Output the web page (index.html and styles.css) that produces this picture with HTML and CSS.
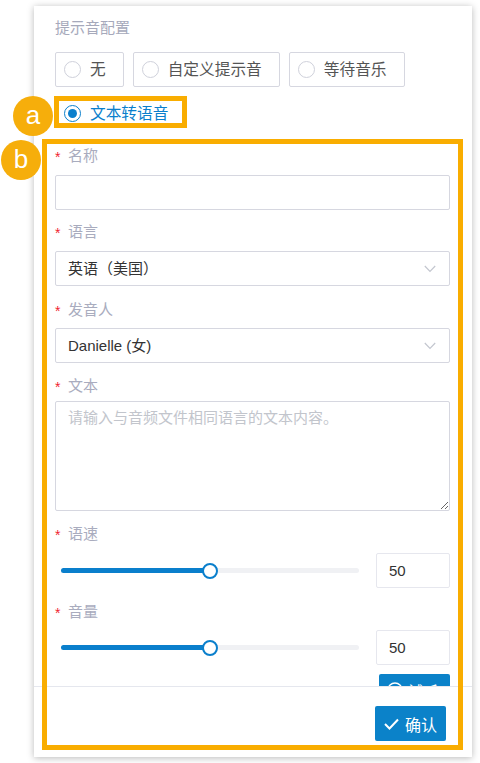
FILE: index.html
```html
<!DOCTYPE html>
<html lang="zh-CN">
<head>
<meta charset="utf-8">
<title>提示音配置</title>
<link rel="stylesheet" href="styles.css">
</head>
<body>
<div class="stage">
  <section class="panel">
    <div class="panel-body">
      <div class="section-title">提示音配置</div>
      <div class="radio-group">
        <label class="radio-option"><span class="radio-dot"></span><span class="radio-text">无</span></label>
        <label class="radio-option"><span class="radio-dot"></span><span class="radio-text">自定义提示音</span></label>
        <label class="radio-option"><span class="radio-dot"></span><span class="radio-text">等待音乐</span></label>
        <label class="radio-option radio-option--checked"><span class="radio-dot"></span><span class="radio-text">文本转语音</span></label>
      </div>

      <div class="form-item form-item--first">
        <div class="form-label"><span class="req">*</span>名称</div>
        <input class="text-input" type="text" value="">
      </div>

      <div class="form-item form-item--near">
        <div class="form-label"><span class="req">*</span>语言</div>
        <div class="select">
          <span class="select-value">英语（美国）</span>
          <svg class="chevron" width="12" height="8" viewBox="0 0 12 8"><polyline points="0.8,1 6,6.4 11.2,1" fill="none" stroke="#c3c6cf" stroke-width="1.2"/></svg>
        </div>
      </div>

      <div class="form-item form-item--loose">
        <div class="form-label"><span class="req">*</span>发音人</div>
        <div class="select">
          <span class="select-value select-value--latin">Danielle (女)</span>
          <svg class="chevron" width="12" height="8" viewBox="0 0 12 8"><polyline points="0.8,1 6,6.4 11.2,1" fill="none" stroke="#c3c6cf" stroke-width="1.2"/></svg>
        </div>
      </div>

      <div class="form-item">
        <div class="form-label form-label--tight"><span class="req">*</span>文本</div>
        <textarea class="textarea" placeholder="请输入与音频文件相同语言的文本内容。"></textarea>
      </div>

      <div class="form-item">
        <div class="form-label"><span class="req">*</span>语速</div>
        <div class="slider-row">
          <div class="slider">
            <div class="slider-track">
              <div class="slider-fill" style="width:50%"></div>
              <div class="slider-thumb" style="left:50%"></div>
            </div>
          </div>
          <input class="num-input" type="text" value="50">
        </div>
      </div>

      <div class="form-item form-item--loose">
        <div class="form-label"><span class="req">*</span>音量</div>
        <div class="slider-row">
          <div class="slider">
            <div class="slider-track">
              <div class="slider-fill" style="width:50%"></div>
              <div class="slider-thumb" style="left:50%"></div>
            </div>
          </div>
          <input class="num-input" type="text" value="50">
        </div>
      </div>

      <div class="preview-row">
        <button class="btn-preview" type="button">
          <svg width="16" height="16" viewBox="0 0 16 16"><circle cx="8" cy="8" r="7" fill="none" stroke="#fff" stroke-width="1.4"/><polygon points="6.5,5 11,8 6.5,11" fill="#fff"/></svg>
          <span>试听</span>
        </button>
      </div>
    </div>
    <div class="panel-footer">
      <button class="btn-confirm" type="button">
        <svg width="15" height="12" viewBox="0 0 15 12"><polyline points="1,6 5.5,10.5 14,1.5" fill="none" stroke="#fff" stroke-width="2"/></svg>
        <span>确认</span>
      </button>
    </div>
  </section>

  <div class="callout-box callout-box--a"></div>
  <div class="callout-box callout-box--b"></div>
  <div class="callout-badge callout-badge--a">a</div>
  <div class="callout-badge callout-badge--b">b</div>
</div>
</body>
</html>
```

FILE: styles.css
```css
* { box-sizing: border-box; }

html, body {
  margin: 0;
  padding: 0;
  background: #fff;
}

body {
  font-family: "Liberation Sans", "Noto Sans CJK SC", sans-serif;
  font-size: 15px;
  color: #333;
}

.stage {
  position: relative;
  width: 480px;
  height: 763px;
  overflow: hidden;
}

.panel {
  margin: 6px 0 0 34px;
  width: 438px;
  height: 751px;
  background: #fff;
  box-shadow: 0 1px 7px rgba(0, 0, 0, 0.28);
  display: flex;
  flex-direction: column;
}

.panel-body {
  flex: none;
  height: 680px;
  overflow: hidden;
  padding: 12px 22px 0 21px;
}

.section-title {
  line-height: 20px;
  color: #a6a9bb;
}

.radio-group {
  margin-top: 14px;
  display: flex;
  flex-wrap: wrap;
  gap: 9px;
}

.radio-option {
  height: 35px;
  display: flex;
  align-items: center;
  padding: 0 17px 0 8px;
  border: 1px solid #d6d7e0;
  border-radius: 2px;
  color: #555;
  font-size: 15.7px;
}

.radio-dot {
  flex: none;
  width: 17px;
  height: 17px;
  border: 1px solid #cfd1db;
  border-radius: 50%;
  margin-right: 9px;
  display: flex;
  align-items: center;
  justify-content: center;
}

.radio-text {
  line-height: 20px;
  white-space: nowrap;
}

.radio-option--checked {
  border-color: #fff;
  color: #0a7fcc;
}

.radio-option--checked .radio-dot {
  border-color: #0a7fcc;
}

.radio-option--checked .radio-dot::after {
  content: "";
  width: 9px;
  height: 9px;
  border-radius: 50%;
  background: #0a7fcc;
}

.form-item {
  margin-top: 13px;
}

.form-item--first {
  margin-top: 15px;
}

.form-item--near {
  margin-top: 12px;
}

.form-item--loose {
  margin-top: 14px;
}

.form-label {
  height: 20px;
  line-height: 20px;
  color: #a9acbe;
  margin-bottom: 9px;
}

.form-item--loose .form-label {
  margin-bottom: 8px;
}

.form-label--tight {
  margin-bottom: 5px;
}

.req {
  display: inline-block;
  color: #f0242f;
  font-family: "Liberation Sans", sans-serif;
  font-size: 14px;
  width: 13px;
  vertical-align: top;
  line-height: 20px;
  position: relative;
  top: 1px;
}

.text-input {
  display: block;
  width: 100%;
  height: 35px;
  border: 1px solid #d6d7e0;
  border-radius: 2px;
  outline: none;
  padding: 0 12px;
  font: inherit;
}

.select {
  height: 35px;
  border: 1px solid #d6d7e0;
  border-radius: 2px;
  display: flex;
  align-items: center;
  justify-content: space-between;
  padding: 0 13px 0 12px;
}

.select-value {
  color: #333;
  line-height: 20px;
}

.chevron {
  display: block;
}

.textarea {
  display: block;
  width: 100%;
  height: 110px;
  border: 1px solid #d6d7e0;
  border-radius: 2px;
  padding: 6px 12px;
  font: inherit;
  line-height: 20px;
  outline: none;
  resize: vertical;
}

.textarea::placeholder {
  color: #c2c5cc;
}

.slider-row {
  height: 35px;
  display: flex;
  align-items: center;
}

.slider {
  flex: 1;
  padding: 0 17px 0 6px;
}

.slider-track {
  position: relative;
  height: 5px;
  border-radius: 3px;
  background: #f0f1f4;
}

.slider-fill {
  height: 100%;
  border-radius: 3px 0 0 3px;
  background: #0a7fcc;
}

.slider-thumb {
  position: absolute;
  top: 50%;
  width: 16px;
  height: 16px;
  border: 2px solid #0a7fcc;
  border-radius: 50%;
  background: #fff;
  transform: translate(-50%, -50%);
}

.num-input {
  flex: none;
  width: 74px;
  height: 35px;
  border: 1px solid #e6e7ee;
  border-radius: 2px;
  padding: 0 12px;
  outline: none;
  font: inherit;
  color: #333;
}

.preview-row {
  margin-top: 9px;
  display: flex;
  justify-content: flex-end;
}

.btn-preview {
  width: 71px;
  height: 32px;
  border: none;
  border-radius: 2px;
  background: #0b82c9;
  color: #fff;
  font: inherit;
  display: flex;
  align-items: center;
  gap: 5px;
  padding: 0 0 0 8px;
}

.panel-footer {
  flex: 1;
  border-top: 1px solid #e5e7ee;
  display: flex;
  justify-content: flex-end;
  align-items: flex-start;
  padding: 19px 26px 0 0;
}

.btn-confirm {
  width: 71px;
  height: 35px;
  border: none;
  border-radius: 2px;
  background: #0b82c9;
  color: #fff;
  font: inherit;
  font-size: 16px;
  display: flex;
  align-items: center;
  justify-content: center;
  gap: 6px;
  padding: 0;
}

.callout-box {
  position: absolute;
  border: 5px solid #f9ad00;
}

.callout-box--a {
  left: 54px;
  top: 96px;
  width: 133px;
  height: 32px;
}

.callout-box--b {
  left: 42px;
  top: 139px;
  width: 421px;
  height: 611px;
}

.callout-badge {
  position: absolute;
  width: 40px;
  height: 40px;
  border-radius: 50%;
  background: #f6ae0b;
  color: #fff;
  font-family: "Liberation Sans", sans-serif;
  font-size: 26px;
  line-height: 38px;
  text-align: center;
}

.callout-badge--a {
  left: 13px;
  top: 96px;
}

.callout-badge--b {
  left: 1px;
  top: 140px;
}
```
